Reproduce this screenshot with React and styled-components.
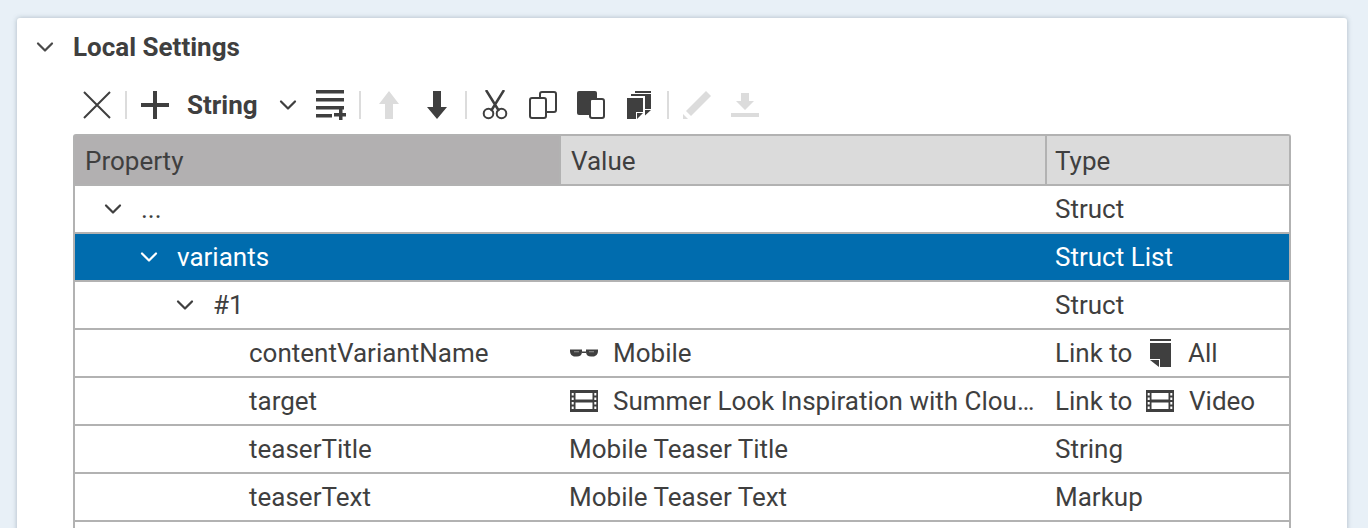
import React from "react";
import styled, { createGlobalStyle } from "styled-components";
import { ChevronDown } from "lucide-react";

const Global = createGlobalStyle`
  html, body { margin: 0; padding: 0; height: 528px; overflow: hidden; background: #e8f0f7; }
  body { font-family: Roboto, "Liberation Sans", sans-serif; color: #3f3f3f; }
`;
const Page = styled.div`
  height: 528px; overflow: hidden; box-sizing: border-box;
  padding: 18px 21px 0 17px; background: #e8f0f7;
`;
const Card = styled.section`
  background: #fff; height: 560px; border-radius: 3px;
  box-shadow: 0 0 5px rgba(90,110,125,.42);
`;
const Header = styled.header`
  display: flex; align-items: center; height: 58px; padding: 0 0 0 14px;
`;
const HeaderChevron = styled.span`
  display: flex; width: 42px; color: #4a4a4a;
`;
const Title = styled.h2`
  margin: 0; font-size: 26px; font-weight: 700; line-height: 58px; color: #3f3f3f;
`;
const Body = styled.div`
  padding: 0 56px;
`;
const Toolbar = styled.div`
  display: flex; align-items: center; height: 58px;
`;
const Tool = styled.span`
  display: flex; align-items: center; justify-content: center;
  width: 48px; height: 32px; flex: none;
  color: ${p => (p.$off ? "#dcdcdc" : "#3f3f3f")};
`;
const Sep = styled.span`
  display: block; flex: none; width: 2px; height: 28px; margin: 0 4px; background: #dcdcdc;
`;
const TypeSelect = styled.span`
  display: flex; align-items: center; flex: none; width: 128px; box-sizing: border-box;
  padding: 0 0 0 8px; font-size: 26px; font-weight: 700; color: #3f3f3f;
`;
const TypeName = styled.span`
  width: 87px;
`;
const Table = styled.div`
  border: 2px solid #b2b2b2; border-radius: 3px 3px 0 0; border-bottom: 0;
`;
const Row = styled.div`
  display: grid; grid-template-columns: 486px 486px 1fr;
  height: 48px; box-sizing: border-box;
  border-bottom: 2px solid #b2b2b2;
  background: ${p => (p.$selected ? "#006cae" : "#fff")};
  color: ${p => (p.$selected ? "#fff" : "#3f3f3f")};
`;
const HeadRow = styled(Row)`
  height: 50px;
`;
const HeadCell = styled.div`
  display: flex; align-items: center; padding: 2px 0 0 ${p => p.$pad}px;
  font-size: 26px;
  background: ${p => (p.$sorted ? "#b2b0b1" : "#dbdbdb")};
  border-right: ${p => (p.$last ? "0" : "2px solid #b2b2b2")};
`;
const Cell = styled.div`
  display: flex; align-items: center; min-width: 0;
  padding-left: ${p => p.$indent}px; padding-right: 10px;
  font-size: 26px; line-height: 46px;
`;
const Arrow = styled.span`
  display: flex; width: 42px; margin-left: -4px; flex: none;
`;
const Ellipsis = styled.span`
  overflow: hidden; text-overflow: ellipsis; white-space: nowrap;
`;
const Glyph = styled.span`
  display: flex; flex: none; width: 28px; margin-right: ${p => p.$gap}px;
  justify-content: center; align-items: center;
`;
const LinkPrefix = styled.span`
  flex: none; width: 91px;
`;

const I = ({ w = 28, h = 28, children }) => (
  <svg width={w} height={h} viewBox={`0 0 ${w} ${h}`} fill="currentColor">{children}</svg>
);

const Close = () => <I><path d="M1 1 27 27M27 1 1 27" stroke="currentColor" strokeWidth="2" fill="none" /></I>;
const Plus = () => <I><path d="M12 0h4v12h12v4H16v12h-4V16H0v-4h12z" /></I>;
const AddList = () => <I w={30} h={30}><path d="M0 0h28v3.500H0zM0 8h28v3.500H0zM0 16h28v3.500H0zM0 24h16v3.500H0z" /><path d="M23 18h3.500v5H31v3.500h-4.500V30H23v-3.500h-5V23h5z" /></I>;
const Up = () => <I><path d="M14 0 24 13h-6v15h-8V13H4z" /></I>;
const Down = () => <I><path d="M10 0h8v16h6L14 28 4 16h6z" /></I>;
const Cut = () => (
  <I w={26} h={30}>
    <path d="M4 0 17 21M22 0 9 21" stroke="currentColor" strokeWidth="2.500" fill="none" />
    <circle cx="6.500" cy="23.500" r="4.800" fill="none" stroke="currentColor" strokeWidth="2" />
    <circle cx="19.500" cy="23.500" r="4.800" fill="none" stroke="currentColor" strokeWidth="2" />
  </I>
);
const Copy = () => (
  <I>
    <rect x="11" y="1" width="16" height="20" rx="2" fill="none" stroke="currentColor" strokeWidth="2" />
    <rect x="1" y="7" width="16" height="20" rx="2" fill="#fff" stroke="currentColor" strokeWidth="2" />
  </I>
);
const Paste = () => (
  <I>
    <path d="M2 0h16a2 2 0 0 1 2 2v22H2a2 2 0 0 1-2-2V2a2 2 0 0 1 2-2z" />
    <rect x="13" y="8" width="14" height="19" rx="2" fill="#fff" stroke="currentColor" strokeWidth="2" />
  </I>
);
const Duplicate = () => (
  <I w={24} h={28}>
    <path d="M8 0h16v2H8zM4 3h20v2H4zM18 5h6v13h-6z" />
    <path d="M0 7h16v14H9v7H0z" />
    <path d="M10 22h6l-6 6zM18 19h6l-6 5.500z" />
  </I>
);
const Pencil = () => <I><path d="M23 0 28 5 8 25 3 20z" /><path d="M0 23 5 28H0z" /></I>;
const Install = () => <I><path d="M10 2h8v8h5L14 19 5 10h5zM0 22h28v4H0z" /></I>;
const Glasses = () => (
  <I w={28} h={8}>
    <path d="M0 .5h12V3c0 3-2.200 4.500-5 4.500H5C2 7.500 0 5 0 2zM16 .5h12V2c0 3-2 5.500-5 5.500h-2c-2.800 0-5-1.500-5-4.500zM12 2.500h4V4h-4z" />
    <path d="M4 2.200h5v1.100H4zM19 2.200h5v1.100h-5z" fill="#fff" opacity=".45" />
  </I>
);
const Film = () => (
  <I w={28} h={22}>
    <path fillRule="evenodd" d="M0 0h28v22H0zM5.500 3v6.500h17V3zm0 9.500V19h17v-6.500zM1.700 3v2.500h2V3zm0 4.500V10h2V7.500zm0 4.500v2.500h2V12zm0 4.500V19h2v-2.500zM24.300 3v2.500h2V3zm0 4.500V10h2V7.500zm0 4.500v2.500h2V12zm0 4.500V19h2v-2.500z" />
  </I>
);
const Doc = () => (
  <I w={21} h={28}>
    <path d="M0 0h21v2H0zM0 4h21v24H10v-8H0z" />
    <path d="M0 21h9v7z" />
  </I>
);
const Chev = ({ size = 28, sw = 1.900 }) => <ChevronDown size={size} strokeWidth={sw} />;

export default function App() {
  return (
    <Page>
      <Global />
      <Card>
        <Header>
          <HeaderChevron><Chev /></HeaderChevron>
          <Title>Local Settings</Title>
        </Header>
        <Body>
          <Toolbar>
            <Tool><Close /></Tool>
            <Sep />
            <Tool><Plus /></Tool>
            <TypeSelect><TypeName>String</TypeName><Chev /></TypeSelect>
            <Tool><AddList /></Tool>
            <Sep />
            <Tool $off><Up /></Tool>
            <Tool><Down /></Tool>
            <Sep />
            <Tool><Cut /></Tool>
            <Tool><Copy /></Tool>
            <Tool><Paste /></Tool>
            <Tool><Duplicate /></Tool>
            <Sep />
            <Tool $off><Pencil /></Tool>
            <Tool $off><Install /></Tool>
          </Toolbar>
          <Table>
            <HeadRow>
              <HeadCell $sorted $pad={10}>Property</HeadCell>
              <HeadCell $pad={10}>Value</HeadCell>
              <HeadCell $last $pad={8}>Type</HeadCell>
            </HeadRow>
            <Row>
              <Cell $indent={28}><Arrow><Chev /></Arrow>...</Cell>
              <Cell $indent={8} />
              <Cell $indent={8}>Struct</Cell>
            </Row>
            <Row $selected>
              <Cell $indent={64}><Arrow><Chev /></Arrow>variants</Cell>
              <Cell $indent={8} />
              <Cell $indent={8}>Struct List</Cell>
            </Row>
            <Row>
              <Cell $indent={100}><Arrow><Chev /></Arrow>#1</Cell>
              <Cell $indent={8} />
              <Cell $indent={8}>Struct</Cell>
            </Row>
            <Row>
              <Cell $indent={174}>contentVariantName</Cell>
              <Cell $indent={9}><Glyph $gap={15}><Glasses /></Glyph>Mobile</Cell>
              <Cell $indent={8}><LinkPrefix>Link to</LinkPrefix><Glyph $gap={14}><Doc /></Glyph>All</Cell>
            </Row>
            <Row>
              <Cell $indent={174}>target</Cell>
              <Cell $indent={9}><Glyph $gap={15}><Film /></Glyph><Ellipsis>Summer Look Inspiration with CloudSense Fashion</Ellipsis></Cell>
              <Cell $indent={8}><LinkPrefix>Link to</LinkPrefix><Glyph $gap={15}><Film /></Glyph>Video</Cell>
            </Row>
            <Row>
              <Cell $indent={174}>teaserTitle</Cell>
              <Cell $indent={8}>Mobile Teaser Title</Cell>
              <Cell $indent={8}>String</Cell>
            </Row>
            <Row>
              <Cell $indent={174}>teaserText</Cell>
              <Cell $indent={8}>Mobile Teaser Text</Cell>
              <Cell $indent={8}>Markup</Cell>
            </Row>
            <Row />
          </Table>
        </Body>
      </Card>
    </Page>
  );
}
